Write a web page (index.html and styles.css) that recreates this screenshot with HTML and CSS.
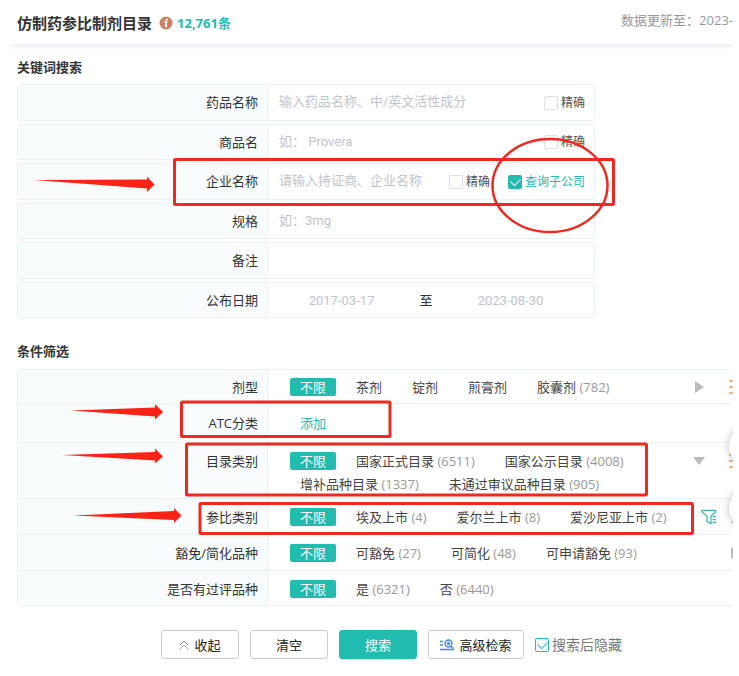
FILE: index.html
```
<!DOCTYPE html>
<html lang="zh-CN">
<head>
    <meta charset="UTF-8">
    <meta name="viewport" content="width=device-width, initial-scale=1.0">
    <title>仿制药参比制剂目录</title>
    <link rel="stylesheet" href="styles.css">
</head>
<body>
    <div class="page">
        <header class="header">
            <h1>仿制药参比制剂目录</h1>
            <svg class="info-icon" width="14" height="14" viewBox="0 0 14 14">
                <circle cx="7" cy="7" r="6.5" fill="#c98262"/>
                <circle cx="7.8" cy="3.7" r="1.1" fill="#fff"/>
                <path d="M5.4 6h2.2l-1 4.2h1.6" fill="none" stroke="#fff" stroke-width="1.5"/>
            </svg>
            <span class="total">12,761条</span>
            <span class="updated">数据更新至：2023-</span>
        </header>

        <main class="content">
            <h2>关键词搜索</h2>
            <form class="search-form">
                <div class="search-row">
                    <label class="row-label" for="drugName">药品名称</label>
                    <div class="row-field">
                        <input type="text" id="drugName" placeholder="输入药品名称、中/英文活性成分">
                        <label class="check"><input type="checkbox">精确</label>
                    </div>
                </div>
                <div class="search-row">
                    <label class="row-label" for="brandName">商品名</label>
                    <div class="row-field">
                        <input type="text" id="brandName" placeholder="如： Provera">
                        <label class="check"><input type="checkbox">精确</label>
                    </div>
                </div>
                <div class="search-row">
                    <label class="row-label" for="company">企业名称</label>
                    <div class="row-field">
                        <input type="text" id="company" placeholder="请输入持证商、企业名称">
                        <label class="check"><input type="checkbox">精确</label>
                        <label class="check active"><input type="checkbox" checked>查询子公司</label>
                    </div>
                </div>
                <div class="search-row">
                    <label class="row-label" for="spec">规格</label>
                    <div class="row-field">
                        <input type="text" id="spec" placeholder="如：3mg">
                    </div>
                </div>
                <div class="search-row">
                    <label class="row-label" for="remark">备注</label>
                    <div class="row-field">
                        <input type="text" id="remark">
                    </div>
                </div>
                <div class="search-row">
                    <label class="row-label" for="dateFrom">公布日期</label>
                    <div class="row-field dates">
                        <input type="text" id="dateFrom" placeholder="2017-03-17">
                        <label for="dateTo">至</label>
                        <input type="text" id="dateTo" placeholder="2023-08-30">
                    </div>
                </div>
            </form>

            <h2>条件筛选</h2>
            <div class="filters">
                <div class="filter-row">
                    <div class="filter-label">剂型</div>
                    <div class="options">
                        <a href="#" class="selected">不限</a>
                        <a href="#">茶剂</a>
                        <a href="#">锭剂</a>
                        <a href="#">煎膏剂</a>
                        <a href="#">胶囊剂 <span>(782)</span></a>
                    </div>
                    <div class="tools">
                        <button type="button" aria-label="展开">
                            <svg width="12" height="14" viewBox="0 0 12 14"><path d="M2 1l9 6-9 6z" fill="#bbb"/></svg>
                        </button>
                        <button type="button" aria-label="列表">
                            <svg width="14" height="14" viewBox="0 0 14 14"><path d="M0 1h14M0 7h14M0 13h14" stroke="#e5a365" stroke-width="1.5"/></svg>
                        </button>
                    </div>
                </div>
                <div class="filter-row atc">
                    <div class="filter-label">ATC分类</div>
                    <div class="options">
                        <a href="#" class="add">添加</a>
                    </div>
                </div>
                <div class="filter-row catalog">
                    <div class="filter-label">目录类别</div>
                    <div class="options">
                        <a href="#" class="selected">不限</a>
                        <a href="#">国家正式目录 <span>(6511)</span></a>
                        <a href="#">国家公示目录 <span>(4008)</span></a>
                        <a href="#">增补品种目录 <span>(1337)</span></a>
                        <a href="#">未通过审议品种目录 <span>(905)</span></a>
                    </div>
                    <div class="tools">
                        <button type="button" aria-label="收起">
                            <svg width="12" height="14" viewBox="0 0 12 14"><path d="M0 3h12l-6 8z" fill="#bbb"/></svg>
                        </button>
                        <button type="button" aria-label="列表">
                            <svg width="14" height="14" viewBox="0 0 14 14"><path d="M0 1h14M0 7h14M0 13h14" stroke="#e5a365" stroke-width="1.5"/></svg>
                        </button>
                    </div>
                </div>
                <div class="filter-row">
                    <div class="filter-label">参比类别</div>
                    <div class="options">
                        <a href="#" class="selected">不限</a>
                        <a href="#">埃及上市 <span>(4)</span></a>
                        <a href="#">爱尔兰上市 <span>(8)</span></a>
                        <a href="#">爱沙尼亚上市 <span>(2)</span></a>
                    </div>
                    <div class="tools funnel">
                        <button type="button" aria-label="筛选">
                            <svg width="16" height="16" viewBox="0 0 16 16" fill="none" stroke="#45b8a8" stroke-width="1.3">
                                <path d="M1 1.500h13.500v1.500L10 7v7.500L6 12.500V7L1 3z"/>
                                <path d="M11.500 7.500H15M11.500 10.500H15M11.500 13.500H15"/>
                            </svg>
                        </button>
                        <button type="button" aria-label="展开">
                            <svg width="12" height="14" viewBox="0 0 12 14"><path d="M11 1v12H1z" fill="#bbb"/></svg>
                        </button>
                    </div>
                </div>
                <div class="filter-row">
                    <div class="filter-label">豁免/简化品种</div>
                    <div class="options">
                        <a href="#" class="selected">不限</a>
                        <a href="#">可豁免 <span>(27)</span></a>
                        <a href="#">可简化 <span>(48)</span></a>
                        <a href="#">可申请豁免 <span>(93)</span></a>
                    </div>
                    <div class="tools last">
                        <button type="button" aria-label="展开">
                            <svg width="12" height="14" viewBox="0 0 12 14"><path d="M1 1l9 6-9 6z" fill="#bbb"/></svg>
                        </button>
                    </div>
                </div>
                <div class="filter-row">
                    <div class="filter-label">是否有过评品种</div>
                    <div class="options">
                        <a href="#" class="selected">不限</a>
                        <a href="#">是 <span>(6321)</span></a>
                        <a href="#">否 <span>(6440)</span></a>
                    </div>
                </div>
            </div>

            <div class="actions">
                <button type="button" class="btn">
                    <svg width="10" height="10" viewBox="0 0 10 10" fill="none" stroke="#999"><path d="M1 5l4-4 4 4M1 9l4-4 4 4"/></svg>
                    收起
                </button>
                <button type="button" class="btn">清空</button>
                <button type="button" class="btn primary">搜索</button>
                <button type="button" class="btn advanced">
                    <svg width="14" height="12" viewBox="0 0 14 12" fill="none" stroke="#4a86e8" stroke-width="1.4">
                        <path d="M0 2.500h3M0 6h3M0 10.500h14M11 7.500l2.500 2"/>
                        <circle cx="8.500" cy="4.500" r="3.500"/>
                        <circle cx="8.500" cy="4.500" r="1"/>
                    </svg>
                    高级检索
                </button>
                <label class="hide-after"><input type="checkbox" checked>搜索后隐藏</label>
            </div>
        </main>

        <div class="float-btn first"></div>
        <div class="float-btn second"></div>
    </div>

    <!-- red marks over the form -->
    <svg class="marks" width="739" height="676" viewBox="0 0 739 676">
        <g fill="none" stroke="#ec2a1e" stroke-width="3">
            <rect x="174.500" y="159.500" width="439" height="45" rx="1"/>
            <rect x="181.500" y="402" width="208.500" height="34.500" rx="1"/>
            <rect x="186.500" y="444" width="460" height="51" rx="1"/>
            <rect x="200" y="503.500" width="492.500" height="30" rx="1"/>
            <ellipse cx="550" cy="185.500" rx="57.500" ry="46.500" stroke-width="2.500"/>
        </g>
        <g fill="#fb2315">
            <path d="M34 180l113-.5v-3l7.500 8-7.500 7.500v-3.500z"/>
            <path d="M71 410.500l84-3v-3.500l8 8-8 7.500v-3z"/>
            <path d="M62 455l93-3v-3.500l8 8-8 7v-3z"/>
            <path d="M73 515.500l101-4.500v-3l7.500 7.500-7.500 7.500v-3z"/>
        </g>
    </svg>
</body>
</html>
```
FILE: styles.css
```
:root {
    --primary: #22bbaf;
    --line: #eaf3f4;
    --label-bg: #f8fcfd;
    --text: #333;
    --muted: #999;
}

* {
    box-sizing: border-box;
}

body {
    position: relative;
    margin: 0;
    background: #fff;
    color: var(--text);
    font-family: "Open Sans", "Noto Sans CJK SC", sans-serif;
    font-size: 13px;
    line-height: 18px;
}

a {
    color: inherit;
    text-decoration: none;
}

button,
input {
    font-family: inherit;
    font-size: inherit;
}

.page {
    position: relative;
    margin: 0 6px 0 9px;
    min-height: 100vh;
    overflow: hidden;
}

.header {
    display: flex;
    align-items: center;
    height: 44px;
    padding-top: 2px;
    padding-left: 8px;
    box-shadow: 0 2px 6px #e6eaee;
}

h1 {
    margin: 0;
    font-size: 15px;
    font-weight: 700;
}

.info-icon {
    margin: 0 4px 0 7px;
}

.total {
    color: var(--primary);
    font-weight: 700;
}

.updated {
    margin-left: auto;
    padding-bottom: 6px;
    color: var(--muted);
}

.content {
    padding: 13px 0 16px 8px;
}

h2 {
    margin: 0;
    font-size: 13px;
    line-height: 20px;
}

/* keyword search */
.search-form {
    display: grid;
    grid-auto-rows: 37px 36px;
    gap: 3px;
    max-width: 578px;
    margin: 7px 0 23px;
}

.search-row {
    display: flex;
    border: 1px solid var(--line);
    border-radius: 3px;
    overflow: hidden;
}

.row-label,
.filter-label {
    flex: 0 0 250px;
    padding-right: 9px;
    border-right: 1px solid var(--line);
    background: var(--label-bg);
    text-align: right;
}

.row-label {
    line-height: 35px;
}

.row-field {
    display: flex;
    flex: 1;
    align-items: center;
    min-width: 0;
    padding: 0 9px 0 11px;
}

.row-field input[type="text"] {
    flex: 1;
    min-width: 0;
    height: 30px;
    padding: 0 0 2px;
    border: 0;
    outline: 0;
    background: none;
    color: var(--text);
    font-family: Roboto, "Noto Sans CJK SC", sans-serif;
}

.row-field input::placeholder {
    color: #c0c4cc;
    opacity: 1;
}

.dates {
    padding: 0 10px 0 0;
}

.dates input[type="text"] {
    padding: 0;
    text-align: center;
}

.dates label {
    flex: 0 0 22px;
    text-align: center;
}

.check,
.hide-after {
    display: flex;
    align-items: center;
    gap: 3px;
}

.check {
    margin-left: 18px;
    color: #555;
    font-size: 12px;
}

.check.active {
    color: var(--primary);
}

input[type="checkbox"] {
    position: relative;
    width: 14px;
    height: 14px;
    margin: 0;
    border: 1px solid #dcdfe6;
    border-radius: 2px;
    background: #fff;
    appearance: none;
}

input[type="checkbox"]:checked {
    border-color: var(--primary);
    background: var(--primary);
}

input[type="checkbox"]:checked::after {
    content: "";
    position: absolute;
    top: 2px;
    left: 2px;
    width: 8px;
    height: 5px;
    border: solid #fff;
    border-width: 0 0 1px 1px;
    transform: rotate(-45deg);
}

/* filters, the table runs past the right edge of the panel */
.filters {
    margin: 8px -40px 24px 0;
    border: 1px solid var(--line);
    border-radius: 3px;
}

.filter-row {
    display: flex;
    border-bottom: 1px solid var(--line);
}

.filter-row:last-child {
    border-bottom: 0;
}

.filter-label,
.options,
.tools {
    padding-top: 9px;
    padding-bottom: 8px;
}

.filter-row:first-child > * {
    padding-top: 8px;
}

.filter-row:first-child > *,
.filter-row:last-child > * {
    padding-bottom: 7px;
}

.filter-row.atc > * {
    padding-top: 10px;
    padding-bottom: 10px;
}

.filter-row.catalog > * {
    padding-bottom: 5px;
}

.filter-label {
    padding-right: 9px;
}

.options {
    display: flex;
    flex: 1;
    flex-wrap: wrap;
    gap: 5px 10px;
    padding-left: 22px;
    color: #444;
}

.options a {
    padding: 0 10px;
    border-radius: 2px;
}

.options span {
    color: var(--muted);
}

.options .selected {
    background: var(--primary);
    color: #fff;
}

.options .add {
    color: var(--primary);
}

.tools {
    display: flex;
    flex: 0 0 79px;
    gap: 24px;
}

.tools.funnel {
    flex-basis: 71px;
    gap: 13px;
}

.tools.last {
    flex-basis: 42px;
}

.tools button {
    display: flex;
    align-items: center;
    height: 18px;
    padding: 0;
    border: 0;
    background: none;
    cursor: pointer;
}

/* bottom buttons */
.actions {
    display: flex;
    align-items: center;
    justify-content: center;
    gap: 11px;
    padding-left: 33px;
}

.btn {
    display: flex;
    align-items: center;
    justify-content: center;
    gap: 5px;
    width: 78px;
    height: 29px;
    padding: 0;
    border: 1px solid #c8ccd4;
    border-radius: 3px;
    background: #fff;
    color: #222;
    cursor: pointer;
}

.btn.primary {
    border-color: var(--primary);
    background: var(--primary);
    color: #fff;
}

.btn.advanced {
    width: 96px;
}

.hide-after {
    color: #777;
    font-size: 14px;
}

.hide-after input[type="checkbox"]:checked {
    background: #fff;
}

.hide-after input[type="checkbox"]:checked::after {
    border-color: var(--primary);
}

.float-btn {
    position: absolute;
    right: -36px;
    width: 40px;
    height: 40px;
    border-radius: 50%;
    background: #fff;
    box-shadow: 0 0 8px rgba(0, 0, 0, 0.25);
}

.float-btn.first {
    top: 426px;
}

.float-btn.second {
    top: 488px;
}

.marks {
    position: absolute;
    top: 0;
    left: 0;
    pointer-events: none;
}
```
